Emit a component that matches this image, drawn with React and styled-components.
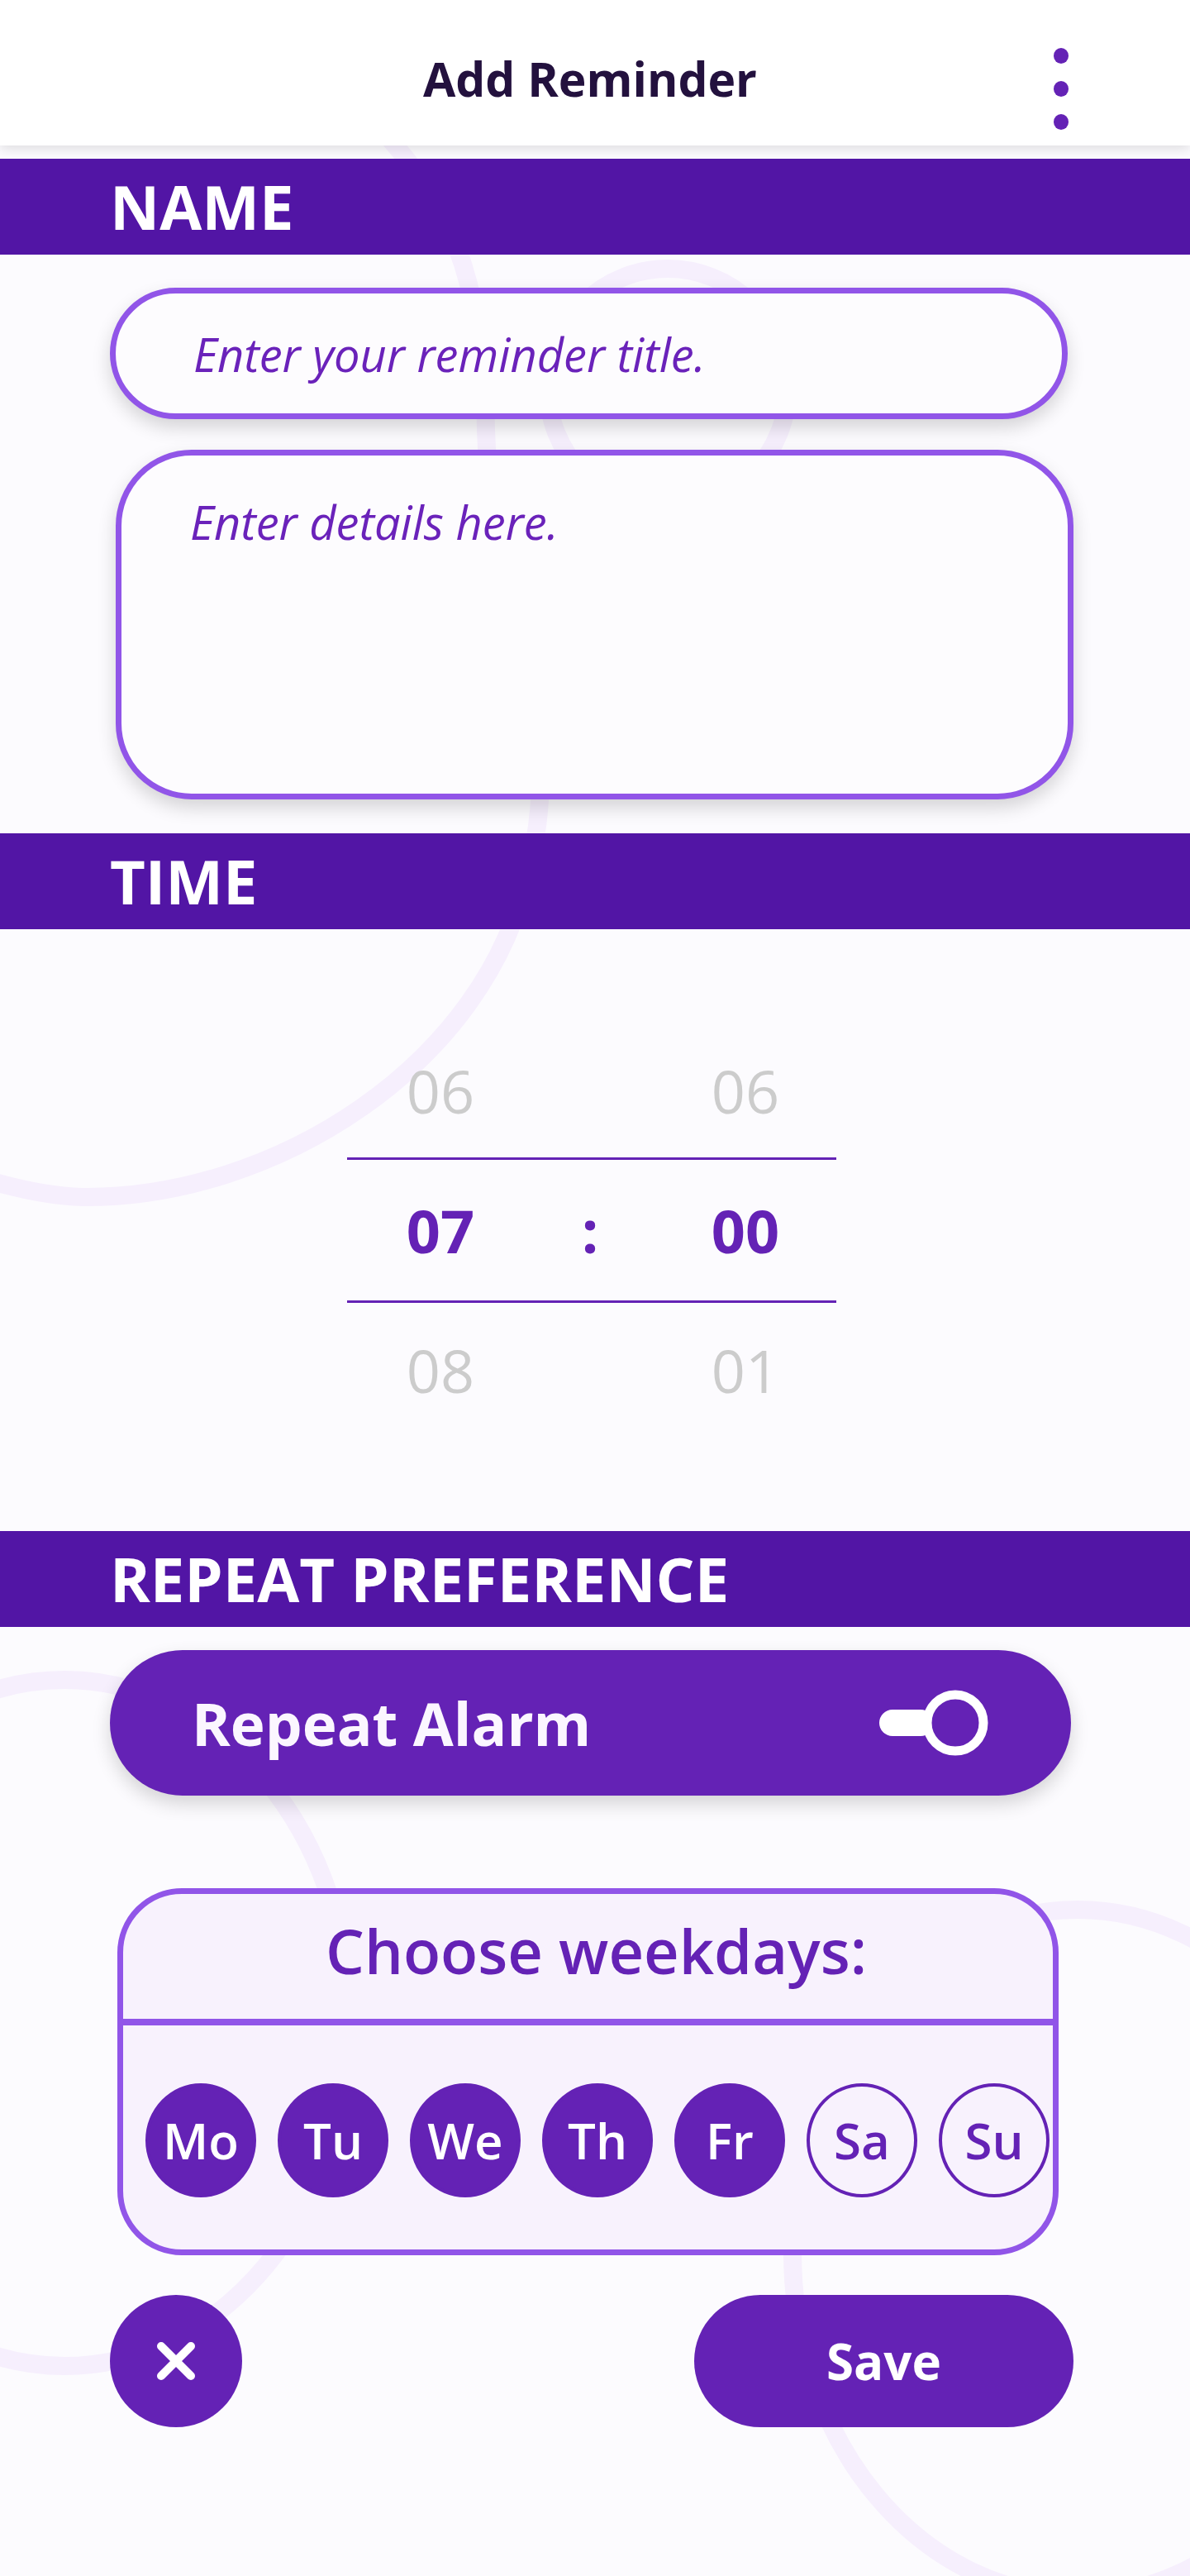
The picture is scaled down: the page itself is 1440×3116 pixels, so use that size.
import React from 'react';
import styled, { createGlobalStyle } from 'styled-components';

const GlobalStyle = createGlobalStyle`
  html, body {
    margin: 0;
    padding: 0;
    background: #fcfbfe;
  }
  body {
    font-family: "Open Sans", "Noto Sans", sans-serif;
  }
  * {
    box-sizing: border-box;
  }
`;

const Page = styled.div`
  position: relative;
  width: 1440px;
  min-height: 3116px;
  overflow: hidden;
  background: #fcfbfe;
`;

const Backdrop = styled.svg`
  position: absolute;
  top: 0;
  left: 0;
  width: 1440px;
  height: 3116px;
  pointer-events: none;
  z-index: 0;
`;

const Content = styled.div`
  position: relative;
  z-index: 1;
  display: flex;
  flex-direction: column;
`;

const Header = styled.header`
  height: 176px;
  background: #ffffff;
  box-shadow: 0 4px 14px rgba(0, 0, 0, 0.12);
  display: grid;
  grid-template-columns: 1fr auto 1fr;
  align-items: center;
  margin-bottom: 16px;
`;

const Title = styled.h1`
  grid-column: 2;
  margin: 0;
  font-size: 57px;
  font-weight: 700;
  color: #23113e;
  letter-spacing: 0;
  transform: translate(-6px, 7px);
`;

const MenuDots = styled.div`
  grid-column: 3;
  justify-self: end;
  margin: 38px 147px 0 0;
  display: flex;
  flex-direction: column;
  gap: 21px;

  span {
    display: block;
    width: 18px;
    height: 19px;
    border-radius: 50%;
    background: #6422b5;
  }
`;

const SectionBar = styled.div`
  height: 116px;
  background: #5215a5;
  display: flex;
  align-items: center;
  padding-left: 133px;
  font-size: 74px;
  font-weight: 700;
  color: #ffffff;
  line-height: 1;
`;

const Fields = styled.div`
  display: flex;
  flex-direction: column;
  padding: 40px 0 41px;
  gap: 37px;
`;

const TitleInput = styled.div`
  margin-left: ${(p) => p.$left}px;
  width: 1159px;
  height: ${(p) => p.$height}px;
  border: 7px solid #9155e8;
  border-radius: ${(p) => p.$radius}px;
  background: #fdfcfe;
  box-shadow: 0 10px 22px rgba(0, 0, 0, 0.16);
  display: flex;
  align-items: ${(p) => (p.$multi ? 'flex-start' : 'center')};
  padding: ${(p) => (p.$multi ? '42px 0 0 83px' : '0 0 0 94px')};
  font-size: 56px;
  font-style: italic;
  color: #6a22ba;
`;

const PickerArea = styled.div`
  height: 728px;
  display: flex;
  align-items: center;
  justify-content: center;
`;

const Picker = styled.div`
  width: 592px;
  margin-left: -8px;
  display: flex;
  flex-direction: column;
`;

const PickerRow = styled.div`
  display: grid;
  grid-template-columns: 226px 136px 240px;
  align-items: center;
  height: ${(p) => (p.$active ? 176 : 162)}px;
  border-top: ${(p) => (p.$active ? '3px solid #6422b5' : 'none')};
  border-bottom: ${(p) => (p.$active ? '3px solid #6422b5' : 'none')};
  font-size: 72px;
  line-height: 1;
  font-weight: ${(p) => (p.$active ? 700 : 400)};
  color: ${(p) => (p.$active ? '#6422b5' : '#cccccc')};
  text-align: center;
`;

const RepeatPill = styled.div`
  margin: 28px 0 0 133px;
  width: 1163px;
  height: 176px;
  border-radius: 88px;
  background: #6422b5;
  box-shadow: 0 10px 22px rgba(0, 0, 0, 0.16);
  display: flex;
  align-items: center;
  justify-content: space-between;
  padding: 0 100px 0 99px;
  color: #fbf6ff;
  font-size: 71px;
  font-weight: 700;
`;

const WeekBox = styled.div`
  margin: 112px 0 0 142px;
  width: 1139px;
  height: 444px;
  border: 7px solid #9155e8;
  border-radius: 78px;
  background: #f8f2fd;
  display: flex;
  flex-direction: column;
  overflow: hidden;
`;

const WeekTitle = styled.div`
  height: 159px;
  border-bottom: 8px solid #9155e8;
  display: flex;
  align-items: center;
  justify-content: center;
  padding: 0 0 14px 20px;
  font-size: 74px;
  font-weight: 600;
  color: #6422b5;
`;

const DayRow = styled.div`
  display: flex;
  gap: 26px;
  padding: 70px 0 0 27px;
`;

const Day = styled.div`
  width: 134px;
  height: 138px;
  flex: none;
  border-radius: 50%;
  border: 4px solid #6422b5;
  background: ${(p) => (p.$on ? '#6422b5' : 'transparent')};
  color: ${(p) => (p.$on ? '#ffffff' : '#6422b5')};
  display: flex;
  align-items: center;
  justify-content: center;
  font-size: 60px;
  font-weight: 600;
  line-height: 1;
`;

const Actions = styled.div`
  display: flex;
  justify-content: space-between;
  align-items: center;
  margin: 48px 0 0 133px;
  width: 1166px;
`;

const CloseButton = styled.button`
  width: 160px;
  height: 160px;
  border: none;
  border-radius: 50%;
  background: #6422b5;
  display: flex;
  align-items: center;
  justify-content: center;
  padding: 0;
`;

const SaveButton = styled.button`
  width: 459px;
  height: 160px;
  border: none;
  border-radius: 80px;
  background: #6422b5;
  color: #ffffff;
  font-family: "Open Sans", sans-serif;
  font-size: 60px;
  font-weight: 700;
  padding: 0;
`;

const ToggleIcon = () => (
  <svg width="134" height="82" viewBox="0 0 134 82">
    <rect x="2" y="25" width="66" height="32" rx="16" fill="#ffffff" />
    <circle cx="94" cy="41" r="34" fill="#6422b5" stroke="#ffffff" strokeWidth="11" />
  </svg>
);

const CrossIcon = () => (
  <svg width="52" height="52" viewBox="0 0 52 52">
    <path d="M8 8 L44 44 M44 8 L8 44" stroke="#ffffff" strokeWidth="10" strokeLinecap="round" />
  </svg>
);

const days = [
  ['Mo', true],
  ['Tu', true],
  ['We', true],
  ['Th', true],
  ['Fr', true],
  ['Sa', false],
  ['Su', false],
];

export default function App() {
  return (
    <Page>
      <GlobalStyle />
      <Backdrop viewBox="0 0 1440 3116">
        <g fill="none" stroke="#f6effd" strokeWidth="22">
          <path d="M455 150 C540 240 585 330 588 520 C592 700 690 860 640 1050 C590 1290 330 1450 100 1448 C60 1447 20 1438 -20 1426" />
          <circle cx="808" cy="470" r="145" />
          <ellipse cx="78" cy="2447" rx="345" ry="415" />
          <ellipse cx="1304" cy="2725" rx="345" ry="415" />
        </g>
      </Backdrop>
      <Content>
        <Header>
          <Title>Add Reminder</Title>
          <MenuDots>
            <span />
            <span />
            <span />
          </MenuDots>
        </Header>

        <SectionBar>NAME</SectionBar>
        <Fields>
          <TitleInput $left={133} $height={159} $radius={80}>
            Enter your reminder title.
          </TitleInput>
          <TitleInput $left={140} $height={423} $radius={92} $multi>
            Enter details here.
          </TitleInput>
        </Fields>

        <SectionBar>TIME</SectionBar>
        <PickerArea>
          <Picker>
            <PickerRow>
              <span>06</span>
              <span />
              <span>06</span>
            </PickerRow>
            <PickerRow $active>
              <span>07</span>
              <span>:</span>
              <span>00</span>
            </PickerRow>
            <PickerRow>
              <span>08</span>
              <span />
              <span>01</span>
            </PickerRow>
          </Picker>
        </PickerArea>

        <SectionBar>REPEAT PREFERENCE</SectionBar>
        <RepeatPill>
          <span>Repeat Alarm</span>
          <ToggleIcon />
        </RepeatPill>

        <WeekBox>
          <WeekTitle>Choose weekdays:</WeekTitle>
          <DayRow>
            {days.map(([label, on]) => (
              <Day key={label} $on={on}>
                {label}
              </Day>
            ))}
          </DayRow>
        </WeekBox>

        <Actions>
          <CloseButton type="button">
            <CrossIcon />
          </CloseButton>
          <SaveButton type="button">Save</SaveButton>
        </Actions>
      </Content>
    </Page>
  );
}
